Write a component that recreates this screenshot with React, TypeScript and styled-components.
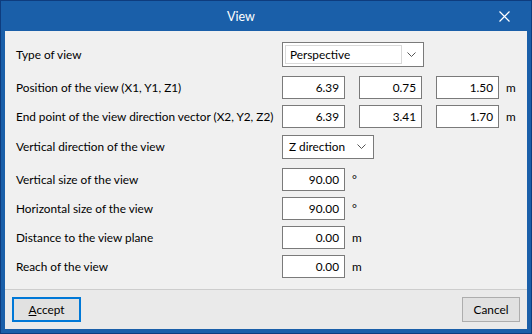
import React from "react";
import styled, { createGlobalStyle } from "styled-components";

const Global = createGlobalStyle`
  html, body { margin: 0; padding: 0; background: #0f3f82; }
  body { font-family: "Lato", "Noto Sans", sans-serif; font-size: 11.8px; color: #000; }
  * { box-sizing: border-box; }
`;

const Window = styled.div`
  width: 532px;
  height: 334px;
  display: flex;
  flex-direction: column;
  background: #1a5fa9;
  border: 1px solid #0e3c7e;
`;

const TitleBar = styled.div`
  height: 30px;
  display: flex;
  align-items: center;
  color: #fff;
  font-size: 12.5px;
`;

const Title = styled.div`
  flex: 1;
  text-align: center;
  padding-top: 1px;
`;

const CloseBtn = styled.div`
  width: 46px;
  height: 30px;
  display: flex;
  align-items: center;
  justify-content: center;
  margin-right: 4px;
`;

const Client = styled.div`
  margin: 0 4px 4px 4px;
  flex: 1;
  display: flex;
  flex-direction: column;
  background: #f0f0f0;
`;

const Body = styled.div`
  padding: 9px 0 8px 11px;
  display: flex;
  flex-direction: column;
`;

const Row = styled.div<{ $mt?: number }>`
  height: 29px;
  margin-top: ${(p) => p.$mt ?? 0}px;
  display: flex;
  align-items: center;
`;

const Label = styled.div`
  width: 266px;
  white-space: nowrap;
  padding-bottom: 1px;
`;

const Controls = styled.div`
  display: flex;
  align-items: center;
  gap: 14px;
`;

const Field = styled.div`
  width: 63px;
  height: 23px;
  background: #fff;
  border: 1px solid #7a7a7a;
  display: flex;
  align-items: center;
  justify-content: flex-end;
  padding-right: 5px;
  padding-bottom: 1px;
`;

const Unit = styled.span`
  margin-left: -7px;
  padding-bottom: 1px;
`;

const Combo = styled.div<{ $w: number; $h: number }>`
  width: ${(p) => p.$w}px;
  height: ${(p) => p.$h}px;
  background: #fff;
  border: 1px solid #7a7a7a;
  display: flex;
  align-items: center;
  padding: 2px;
`;

const ComboEdit = styled.div<{ $framed?: boolean }>`
  flex: 1;
  height: 100%;
  display: flex;
  align-items: center;
  padding-left: ${(p) => (p.$framed ? 4 : 3)}px;
  padding-bottom: 1px;
  border: 1px solid ${(p) => (p.$framed ? "#d9d9d9" : "transparent")};
`;

const Arrow = styled.div`
  width: 19px;
  display: flex;
  justify-content: center;
  align-items: center;
`;

const Separator = styled.div`
  height: 1px;
  background: #cdcdcd;
`;

const Footer = styled.div`
  flex: 1;
  background: #eaeaea;
  display: flex;
  justify-content: space-between;
  align-items: flex-start;
  padding: 7px 7px 0 7px;
`;

const Button = styled.button<{ $w: number; $def?: boolean }>`
  width: ${(p) => p.$w}px;
  height: 25px;
  background: #e1e1e1;
  border: ${(p) => (p.$def ? "2px solid #0078d7" : "1px solid #adadad")};
  font: inherit;
  color: #000;
  padding: 0 0 1px 0;
  display: flex;
  align-items: center;
  justify-content: center;
`;

const Chevron = () => (
  <svg width="9" height="5" viewBox="0 0 9 5">
    <path d="M0.5 0.5 L4.5 4.5 L8.5 0.5" fill="none" stroke="#555" strokeWidth="1" />
  </svg>
);

const XIcon = () => (
  <svg width="11" height="11" viewBox="0 0 11 11">
    <path d="M0.5 0.5 L10.5 10.5 M10.5 0.5 L0.5 10.5" stroke="#fff" strokeWidth="1.2" />
  </svg>
);

export default function App() {
  return (
    <>
      <Global />
      <Window>
        <TitleBar>
          <Title>View</Title>
          <CloseBtn>
            <XIcon />
          </CloseBtn>
        </TitleBar>
        <Client>
          <Body>
            <Row>
              <Label>Type of view</Label>
              <Combo $w={142} $h={25}>
                <ComboEdit $framed>Perspective</ComboEdit>
                <Arrow>
                  <Chevron />
                </Arrow>
              </Combo>
            </Row>
            <Row $mt={4}>
              <Label>Position of the view (X1, Y1, Z1)</Label>
              <Controls>
                <Field>6.39</Field>
                <Field>0.75</Field>
                <Field>1.50</Field>
                <Unit>m</Unit>
              </Controls>
            </Row>
            <Row>
              <Label>End point of the view direction vector (X2, Y2, Z2)</Label>
              <Controls>
                <Field>6.39</Field>
                <Field>3.41</Field>
                <Field>1.70</Field>
                <Unit>m</Unit>
              </Controls>
            </Row>
            <Row $mt={1}>
              <Label>Vertical direction of the view</Label>
              <Combo $w={92} $h={24}>
                <ComboEdit>Z direction</ComboEdit>
                <Arrow>
                  <Chevron />
                </Arrow>
              </Combo>
            </Row>
            <Row $mt={4}>
              <Label>Vertical size of the view</Label>
              <Controls>
                <Field>90.00</Field>
                <Unit>°</Unit>
              </Controls>
            </Row>
            <Row>
              <Label>Horizontal size of the view</Label>
              <Controls>
                <Field>90.00</Field>
                <Unit>°</Unit>
              </Controls>
            </Row>
            <Row>
              <Label>Distance to the view plane</Label>
              <Controls>
                <Field>0.00</Field>
                <Unit>m</Unit>
              </Controls>
            </Row>
            <Row>
              <Label>Reach of the view</Label>
              <Controls>
                <Field>0.00</Field>
                <Unit>m</Unit>
              </Controls>
            </Row>
          </Body>
          <Separator />
          <Footer>
            <Button $w={69} $def>
              <span>
                <u>A</u>ccept
              </span>
            </Button>
            <Button $w={58}>Cancel</Button>
          </Footer>
        </Client>
      </Window>
    </>
  );
}
